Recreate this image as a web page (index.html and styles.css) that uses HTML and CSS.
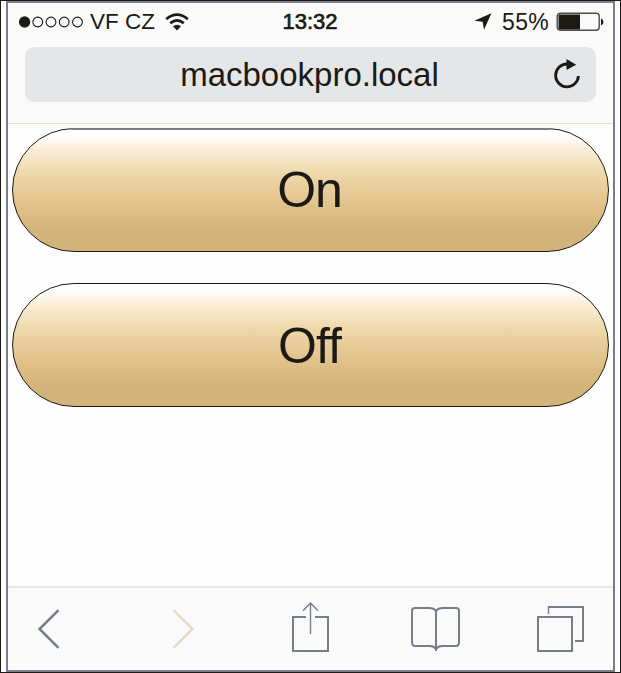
FILE: index.html
```html
<!DOCTYPE html>
<html lang="en">
<head>
<meta charset="utf-8">
<title>macbookpro.local</title>
<link rel="stylesheet" href="styles.css">
</head>
<body>
<div class="phone">
  <header class="header">
    <div class="status">
      <div class="status-left">
        <svg class="signal" width="64" height="12" viewBox="0 0 64 12">
          <circle class="full" cx="5.6" cy="6" r="5.1"/>
          <circle cx="18.8" cy="6" r="4.9"/><circle cx="32" cy="6" r="4.9"/><circle cx="45.2" cy="6" r="4.9"/><circle cx="58.5" cy="6" r="4.9"/>
        </svg>
        <span class="carrier">VF CZ</span>
        <svg class="wifi" width="24" height="18" viewBox="0 0 24 18">
          <path class="arc" d="M1.2 6.1Q12 -3 22.8 6.1M5.2 10.3Q12 4.4 18.8 10.3"/>
          <path d="M8 13.2Q12 10.2 16 13.2L12 17.4Z"/>
        </svg>
      </div>
      <span class="time">13:32</span>
      <div class="status-right">
        <svg class="location" width="18" height="17" viewBox="0 0 18 17"><path d="M17.4 .2L10 16.8L8.6 8.8L.4 7.8Z"/></svg>
        <span class="percent">55%</span>
        <svg class="battery" width="48" height="20" viewBox="0 0 48 20">
          <rect class="case" x="1.2" y="1.2" width="42" height="17" rx="3"/>
          <rect x="2.5" y="2.5" width="21.5" height="15"/>
          <path d="M45 6.5Q47.4 7 47.4 10T45 13.5Z"/>
        </svg>
      </div>
    </div>
    <div class="address">
      <span class="url">macbookpro.local</span>
      <svg class="reload" width="28" height="30" viewBox="0 0 28 30">
        <path class="ring" d="M14 5A11.4 11.4 0 1 0 25.4 17"/>
        <path d="M13.5 0L23.2 5.7L13.5 11Z"/>
      </svg>
    </div>
  </header>
  <main class="page">
    <button class="pill">On</button>
    <button class="pill">Off</button>
  </main>
  <nav class="toolbar">
    <svg class="back" width="24" height="42" viewBox="0 0 24 42"><path d="M21.5 2.2L2.5 21L21.5 39.8"/></svg>
    <svg class="forward" width="24" height="42" viewBox="0 0 24 42"><path class="halo" d="M2.5 2.2L21.5 21L2.5 39.8"/><path class="core" d="M2.5 2.2L21.5 21L2.5 39.8"/></svg>
    <svg class="share" width="38" height="50" viewBox="0 0 38 50"><path d="M14 15H1V49H36V15H23"/><path class="thin" d="M18.5 32V1M11 8.7L18.5 1L26 8.7"/></svg>
    <svg class="book" width="50" height="46" viewBox="0 0 50 46"><path d="M26 5C24 2 21 2 19 2H5Q2 2 2 5V36Q2 40 5 40H20Q24 40 26 43Q28 40 32 40H46Q49 40 49 36V5Q49 2 46 2H33C30 2 28 2 26 5V45"/></svg>
    <svg class="tabs" width="48" height="47" viewBox="0 0 48 47"><path d="M1 12H35V46H1Z"/><path d="M38 36H46V2H11"/><path class="thin" d="M11.5 1V9"/></svg>
  </nav>
</div>
</body>
</html>
```
FILE: styles.css
```css
* { box-sizing: border-box; }

body {
  margin: 0;
  height: 673px;
  padding: 0 5px;
  border: 1px solid #1b1a16;
  background: #fdfdfd;
  font-family: "Liberation Sans", Arial, sans-serif;
  color: #1b1a14;
}

svg { display: block; flex: none; fill: #1b1a14; }

.phone {
  display: flex;
  flex-direction: column;
  height: 671px;
  border: 2px solid #7b7f8b;
  border-right-color: #767e8a;
  background: #fdfdfd;
}

.header {
  height: 121px;
  padding: 0 17px;
  border-bottom: 1px solid #e8dfcf;
  background: #fafafa;
}

.status {
  display: grid;
  grid-template-columns: 1fr auto 1fr;
  align-items: center;
  height: 44px;
  margin: 0 -8px 0 -6px;
  padding-bottom: 7px;
  font-size: 22.5px;
}

.status-left,
.status-right { display: flex; align-items: center; }
.status-right { justify-content: flex-end; }
.signal circle { fill: none; stroke: #1b1a14; stroke-width: 1.1; }
.signal .full { fill: #1b1a14; }
.carrier { margin-left: 7px; }
.wifi { margin-left: 10px; }
.wifi .arc { fill: none; stroke: #1b1a14; stroke-width: 2.7; }
.time { margin: 0 3px 0 0; font-size: 22px; -webkit-text-stroke: .7px #1b1a14; }
.percent { margin: 2px 7px 0 10px; font-size: 23px; letter-spacing: .3px; }
.battery .case { fill: none; stroke: #4b4c50; stroke-width: 1.4; }

.address {
  display: grid;
  grid-template-columns: 41px 1fr 43px;
  align-items: center;
  height: 55px;
  border-radius: 9px;
  background: #e5e6e8;
}

.url { grid-column: 2; text-align: center; font-size: 33px; line-height: 55px; }
.reload { margin: -1px 0 0; }
.reload .ring { fill: none; stroke: #1b1a14; stroke-width: 2.8; }

.page {
  flex: 1;
  display: flex;
  flex-direction: column;
  gap: 31px;
  padding: 4px 4px 0;
}

.pill {
  position: relative;
  height: 124px;
  padding: 2px 2px 0 0;
  border: 1.5px solid #1b1a16;
  border-radius: 62px;
  background: linear-gradient(#fefefe 5%, #fbeed8 17%, #efd9ae 35%, #e3c48d 59%, #d3b57b 82%, #d2b47a);
  font: 50px "Liberation Sans", Arial, sans-serif;
  letter-spacing: -1px;
  color: #1b1a14;
}

.pill:first-child { padding-top: 0; }

.pill:first-child::before {
  content: "";
  position: absolute;
  top: -1px;
  left: 58px;
  right: 58px;
  height: 2px;
  background: #7b7f8b;
}

.toolbar {
  display: flex;
  align-items: flex-start;
  height: 84px;
  padding: 14px 0 0 29px;
  border-top: 2px solid #e5e6e8;
  background: #fafafa;
}

.toolbar svg { fill: none; stroke: #767e8a; stroke-width: 2; }
.toolbar .thin { stroke-width: 1.4; }
.toolbar .back { margin-top: 6px; stroke-width: 2.5; }
.toolbar .forward { margin: 6px 0 0 110px; }
.toolbar .halo { stroke: #e5e6e8; stroke-width: 3; }
.toolbar .core { stroke: #ead5b2; stroke-width: 1.3; }
.toolbar .share { margin-left: 97px; }
.toolbar .book { margin: 4px 0 0 80px; }
.toolbar .tabs { margin: 3px 0 0 77px; }
```
